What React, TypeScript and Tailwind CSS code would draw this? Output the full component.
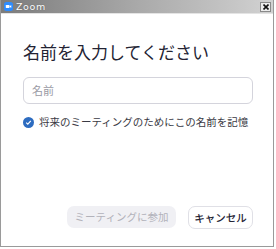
import React from "react";

const jp = { fontFamily: '"Noto Sans CJK JP", "Noto Sans", sans-serif' };

function TitleBar() {
  return (
    <div className="flex h-[14px] items-center justify-between border-b border-[#e4e4e4] bg-gradient-to-r from-[#7c7c7c] via-[#a9a9a9] to-[#d2d2d2] pl-[3px] pr-[2px]">
      <div className="flex items-center gap-[3px]">
        <svg width="9" height="9" viewBox="0 0 9 9">
          <rect x="0" y="0" width="9" height="9" rx="2.5" fill="#2d8cff" />
          <rect x="1.8" y="3" width="3.6" height="3" rx="0.6" fill="#fff" />
          <path d="M5.6 4.1 L7.3 3.2 L7.3 5.8 L5.6 4.9 Z" fill="#fff" />
        </svg>
        <span
          className="text-[9.5px] leading-none tracking-[0.6px] text-white [text-shadow:0_0_1px_#555]"
          style={{ fontFamily: '"DejaVu Sans", sans-serif' }}
        >
          Zoom
        </span>
      </div>
      <div className="flex h-[10px] w-[11px] items-center justify-center border border-[#8a8a8a] bg-[#ececec]">
        <svg width="6" height="6" viewBox="0 0 6 6">
          <path d="M0.5 0.5 L5.5 5.5 M5.5 0.5 L0.5 5.5" stroke="#111" strokeWidth="1.6" />
        </svg>
      </div>
    </div>
  );
}

export default function App() {
  return (
    <div className="h-[249px] w-[276px] bg-white" style={jp}>
      <div className="flex h-[247px] w-[274px] flex-col border border-t-0 border-[#9a9a9a] bg-white">
        <TitleBar />
        <div className="flex flex-1 flex-col pl-[22px] pr-[20px]">
          <h1 className="mt-[28px] text-[17px] font-normal leading-[20px] text-[#232333]">
            名前を入力してください
          </h1>
          <div className="mt-[15px] flex h-[27px] w-[230px] items-center rounded-[6px] border border-[#d4d4dc] px-[8px]">
            <span className="text-[11px] text-[#9a9aa4]">名前</span>
          </div>
          <label className="mt-[11px] flex items-center gap-[5px]">
            <span className="flex h-[11px] w-[11px] items-center justify-center rounded-full bg-[#2d6cc0]">
              <svg width="7" height="7" viewBox="0 0 7 7">
                <path d="M1.2 3.6 L2.8 5.1 L5.8 1.9" fill="none" stroke="#fff" strokeWidth="1.2" />
              </svg>
            </span>
            <span className="text-[10.5px] leading-[14px] text-[#3a3a44]">
              将来のミーティングのためにこの名前を記憶
            </span>
          </label>
          <div className="mt-auto mb-[17px] flex w-[230px] justify-end gap-[12px]">
            <button className="h-[22px] w-[109px] rounded-[7px] bg-[#f0f0f4] text-[10.5px] text-[#b2b2ba]">
              ミーティングに参加
            </button>
            <button className="h-[23px] w-[65px] rounded-[7px] border border-[#e0e0e6] bg-white text-[10.5px] font-medium text-[#232333]">
              キャンセル
            </button>
          </div>
        </div>
      </div>
    </div>
  );
}
